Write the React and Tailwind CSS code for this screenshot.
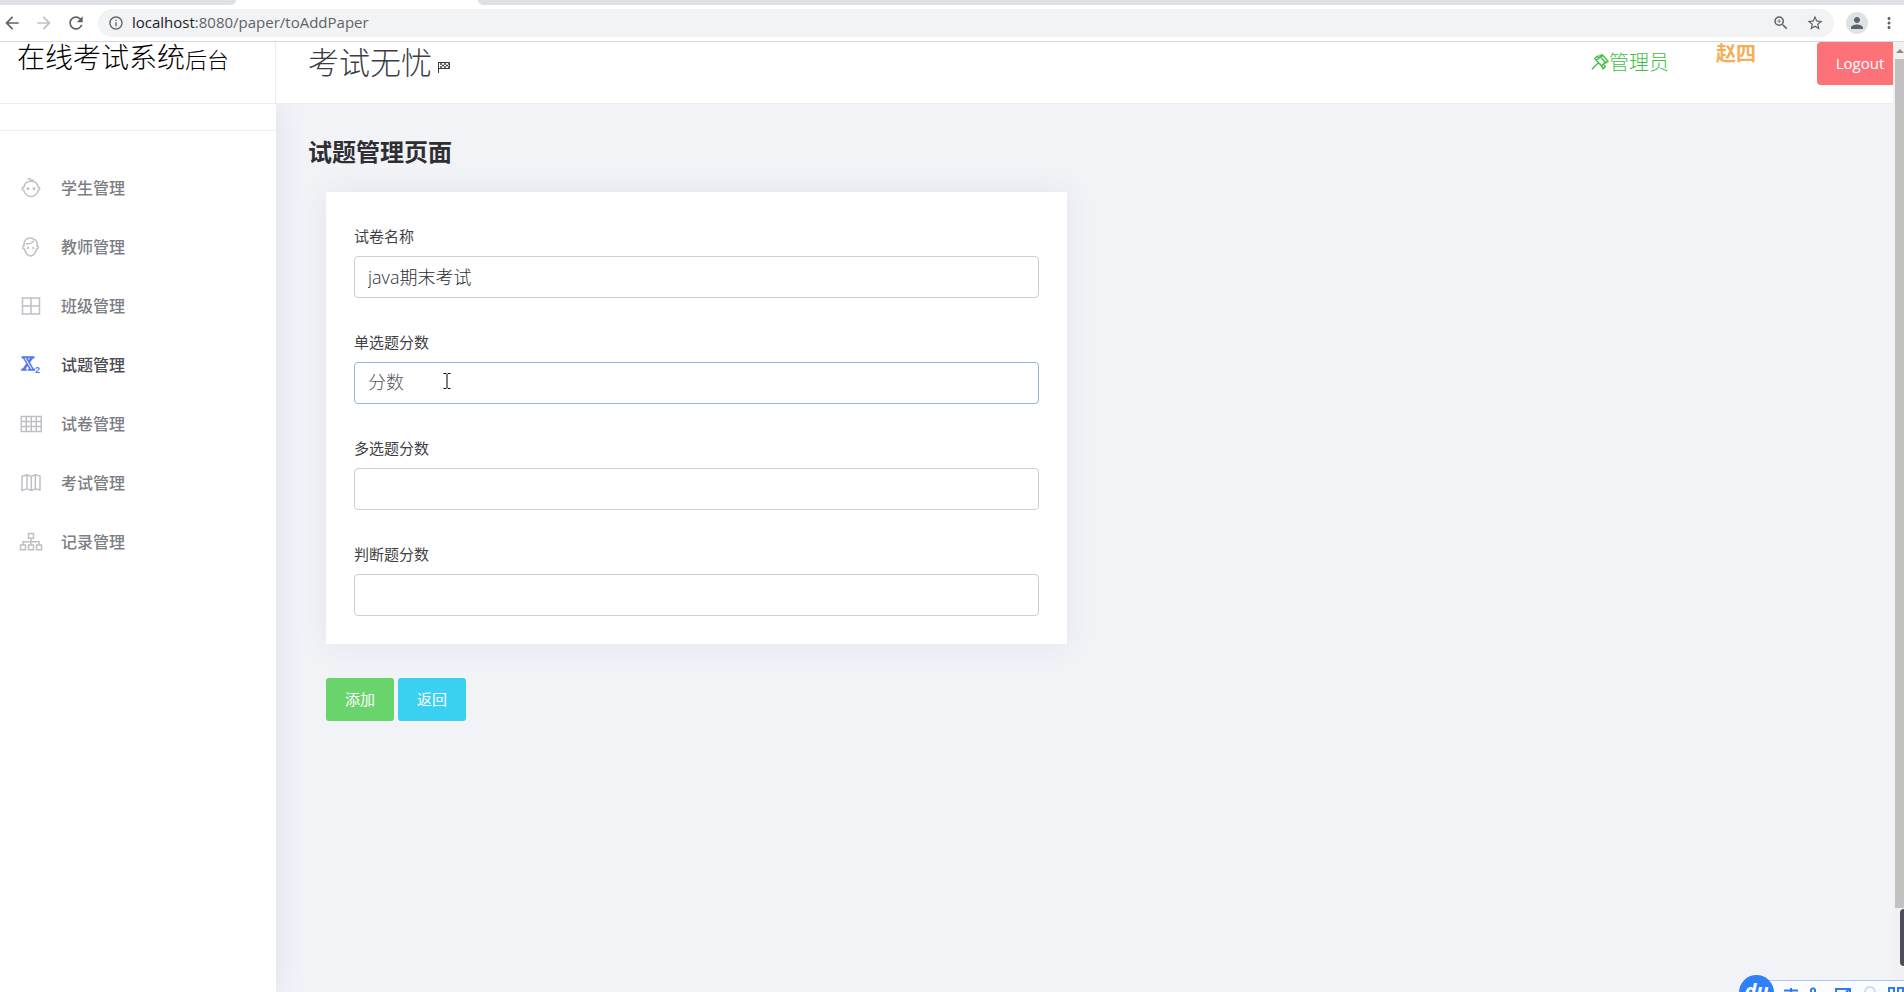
import React, { useState } from "react";
import {
  MdArrowBack,
  MdArrowForward,
  MdRefresh,
  MdInfoOutline,
  MdZoomIn,
  MdStarBorder,
  MdPerson,
  MdMoreVert,
} from "react-icons/md";

const iconProps = {
  viewBox: "0 0 20 20",
  fill: "none",
  stroke: "currentColor",
  strokeWidth: "1.5",
  overflow: "visible",
  className: "w-5 h-5 shrink-0",
  "aria-hidden": true,
};

const StudentIcon = () => (
  <svg {...iconProps}>
    <path d="M2.8 9.2C3.4 5.6 6.3 3.3 10 3.3s6.6 2.3 7.2 5.9c.9 0 1.6.7 1.6 1.5s-.7 1.400-1.500 1.400C16.400 15.600 13.600 18.400 10 18.400s-6.400-2.800-7.300-6.300c-.8 0-1.500-.6-1.500-1.400s.7-1.500 1.600-1.500z" />
    <path d="M6.5 .8c2.6-.2 3.8.6 4 2.5M10.6 3.2c.4-1 1.2-1.4 2.3-1.2" />
    <circle cx="7" cy="10.7" r=".7" fill="currentColor" />
    <circle cx="13" cy="10.7" r=".7" fill="currentColor" />
  </svg>
);

const TeacherIcon = () => (
  <svg {...iconProps}>
    <path d="M3 9C2.6 3.6 5.3 1 9.5 1c1.6 0 2.6.4 3.2 1.3C15.6 2.8 16.6 5.6 16 9c1.2 0 1.5 1 1.2 1.9-.3.8-.9 1.2-1.7 1.100C14.400 16 12.200 19 9.500 19S4.600 16 3.500 12c-.8.1-1.400-.3-1.700-1.100C1.500 10 1.800 9 3 9z" />
    <path d="M4.600 6.800c3.800.3 7-.8 8.400-3.300" />
    <circle cx="7" cy="11" r=".4" fill="currentColor" />
    <circle cx="12.2" cy="11" r=".4" fill="currentColor" />
  </svg>
);

const ClassIcon = () => (
  <svg {...iconProps}>
    <path d="M1.500 2h17v16h-17zM10 2v16M1.500 10h17" />
  </svg>
);

const QuestionIcon = () => (
  <svg {...iconProps}>
    <text x="0.500" y="14.500" fontSize="18" fontWeight="700" fontFamily="Liberation Serif" strokeWidth="1.400">
      X
    </text>
    <text x="14" y="18" fontSize="9" fontWeight="700" fontFamily="Liberation Sans" fill="currentColor" stroke="none">
      2
    </text>
  </svg>
);

const PaperIcon = () => (
  <svg {...iconProps}>
    <path d="M.3 2.500h19.900v15H.3zM.3 7.500h19.900M.3 12.500h19.900M5.300 2.500v15M10.300 2.500v15M15.300 2.500v15" />
  </svg>
);

const ExamIcon = () => (
  <svg {...iconProps}>
    <path d="M1 3.500l5-1.700 4.300 1.700 4-1.700 4.700 1.200v14l-4.700-1.200-4 1.700L6 15.800l-5 1.700zM6 1.800v14M10.300 3.500v14M14.300 1.800v14" />
  </svg>
);

const RecordIcon = () => (
  <svg {...iconProps}>
    <path d="M7.500 1.500h5v4.700h-5zM-.5 13h5v4.800h-5zM7.500 13h5v4.800h-5zM15.500 13h5v4.800h-5zM10 6.200V13M2 13V9.800h16V13" />
  </svg>
);

const GavelIcon = () => (
  <svg viewBox="0 0 20 20" fill="none" stroke="currentColor" strokeWidth="1.5" className="w-[18px] h-[18px]" aria-hidden="true">
    <path d="M1 17l7-7M4 5l3-2.500 2 2L5.800 7zM5.800 7l7 7.500M9 4.500l4-2.500M12.500 12l4.500-3.500M9.500 2l3-1.200L19 8l-2.500 2zM11.500 13l2-1.500 2.500 2.500-2.500 2.500z" />
  </svg>
);

const FlagIcon = () => (
  <svg viewBox="0 0 12 12" fill="none" stroke="currentColor" className="w-3 h-3" aria-hidden="true">
    <path d="M.5 1v11M1 1.500h10.500v6H1" />
    <path d="M2 3h2M6 3h2M10 3h1M4 4.500h2M8 4.500h2M2 6h2M6 6h2M10 6h1" strokeWidth="1.500" />
  </svg>
);

const menu = [
  { label: "学生管理", icon: StudentIcon },
  { label: "教师管理", icon: TeacherIcon },
  { label: "班级管理", icon: ClassIcon },
  { label: "试题管理", icon: QuestionIcon, active: true },
  { label: "试卷管理", icon: PaperIcon },
  { label: "考试管理", icon: ExamIcon },
  { label: "记录管理", icon: RecordIcon },
];

const fields = [
  { name: "paperName", label: "试卷名称" },
  { name: "singleScore", label: "单选题分数", placeholder: "分数", focused: true },
  { name: "multiScore", label: "多选题分数" },
  { name: "judgeScore", label: "判断题分数" },
];

const BrowserBar = () => (
  <div className="shrink-0 bg-white border-b border-[#d5d7da]">
    <div className="flex h-[5px]">
      <div className="w-[236px] bg-[#dee1e6] rounded-br-md" />
      <div className="w-[242px]" />
      <div className="flex-1 bg-[#dee1e6] rounded-bl-md" />
    </div>
    <div className="flex items-center h-9 pl-[2px] pr-[6px] text-[#5f6368]">
      <button type="button" aria-label="Back" className="mr-3">
        <MdArrowBack size={20} />
      </button>
      <button type="button" aria-label="Forward" className="mr-3 text-[#bdc1c6]">
        <MdArrowForward size={20} />
      </button>
      <button type="button" aria-label="Reload" className="mr-3">
        <MdRefresh size={20} />
      </button>
      <div className="flex flex-1 items-center h-7 rounded-full bg-[#f1f3f4] px-[10px]">
        <MdInfoOutline size={16} />
        <span className="ml-2 flex-1 text-[15px] leading-5 pb-[2px]">
          <span className="text-[#202124]">localhost</span>:8080/paper/toAddPaper
        </span>
        <button type="button" aria-label="Zoom" className="mr-4">
          <MdZoomIn size={18} />
        </button>
        <button type="button" aria-label="Bookmark">
          <MdStarBorder size={18} />
        </button>
      </div>
      <button type="button" aria-label="Profile" className="ml-3 flex items-center justify-center w-[22px] h-[22px] rounded-full bg-[#dee1e6]">
        <MdPerson size={18} />
      </button>
      <button type="button" aria-label="Menu" className="ml-3">
        <MdMoreVert size={18} />
      </button>
    </div>
  </div>
);

const Sidebar = () => (
  <aside className="w-[276px] shrink-0 bg-white shadow-[0_0_28px_0_rgba(82,63,105,0.10)]">
    <div className="h-[27px] border-b border-[#ebedf2]" />
    <nav className="pt-[27px]">
      {menu.map((item) => (
        <a
          key={item.label}
          href="#"
          className={`flex items-center h-[59px] pl-[21px] gap-5 text-base font-medium ${
            item.active ? "text-[#4a4a52]" : "text-[#7c7e84]"
          }`}
        >
          <span className={item.active ? "text-[#5578eb]" : "text-[#bfbfc6]"}>
            <item.icon />
          </span>
          {item.label}
        </a>
      ))}
    </nav>
  </aside>
);

const Header = () => (
  <header className="relative z-10 flex h-[62px] shrink-0 border-b border-[#ebedf2] bg-white">
    <div className="w-[276px] shrink-0 border-r border-[#ebedf2] pl-[17px]">
      <h3 className="text-[28px] leading-[30px] font-light text-black">
        在线考试系统<small className="text-[22px]">后台</small>
      </h3>
    </div>
    <div className="flex-1 pl-8 pt-[2px] flex gap-[6px] items-start text-[#3c3c44]">
      <h2 className="text-[31px] leading-9 font-light">考试无忧</h2>
      <span className="pt-[17px]">
        <FlagIcon />
      </span>
    </div>
    <div className="flex items-start">
      <span className="flex items-center pt-[7px] text-xl leading-7 font-light text-[#3fc043]">
        <GavelIcon />
        管理员
      </span>
      <span className="ml-[47px] text-xl leading-6 font-bold text-[#f5ae57]">赵四</span>
      <button type="button" className="ml-[61px] h-[43px] w-[76px] pl-[10px] rounded-l bg-[#fd7279] text-[15px] text-white">
        Logout
      </button>
    </div>
  </header>
);

// Pointer resting in the score field
const TextCursor = () => (
  <svg viewBox="0 0 8 16" fill="none" stroke="#000" className="absolute left-[89px] top-[11px] w-2 h-4 pointer-events-none" aria-hidden="true">
    <path d="M.5 .5h2.500L4 1.500l1-1h2.500M.5 15.500h2.500l1-1 1 1h2.500M4 1.500v13" />
  </svg>
);

const PaperForm = () => {
  const [paper, setPaper] = useState({
    paperName: "java期末考试",
    singleScore: "",
    multiScore: "",
    judgeScore: "",
  });

  const handleChange = (e) => {
    setPaper({ ...paper, [e.target.name]: e.target.value });
  };

  return (
    <form className="w-[741px] ml-[18px]" onSubmit={(e) => e.preventDefault()}>
      <div className="bg-white pt-8 px-7 pb-7 shadow-[0_0_28px_0_rgba(82,63,105,0.08)] space-y-8">
        {fields.map((field) => (
          <div key={field.name}>
            <label htmlFor={field.name} className="block text-[15px] leading-6 mb-2 text-[#3f3f46]">
              {field.label}
            </label>
            <div className="relative">
              <input
                id={field.name}
                name={field.name}
                type="text"
                value={paper[field.name]}
                placeholder={field.placeholder}
                onChange={handleChange}
                className={`block w-full h-[42px] px-[13px] pb-[2px] rounded border bg-white text-lg font-light text-[#2b3036] outline-none placeholder:text-[#4f575e] ${
                  field.focused ? "border-[#91b8da]" : "border-[#ccced8]"
                }`}
              />
              {field.focused && <TextCursor />}
            </div>
          </div>
        ))}
      </div>
      <div className="flex gap-1 mt-[34px]">
        <button type="submit" className="w-[68px] h-[43px] rounded-[3px] bg-[#69d46c] text-[15px] text-white">
          添加
        </button>
        <button type="button" className="w-[68px] h-[43px] rounded-[3px] bg-[#3ad1f1] text-[15px] text-white">
          返回
        </button>
      </div>
    </form>
  );
};

const Scrollbar = () => (
  <div className="w-[11px] shrink-0 bg-[#f1f1f1] flex flex-col items-end pb-[84px]" aria-hidden="true">
    <div className="h-[17px] w-[9px] flex items-center justify-center">
      <div className="border-x-4 border-b-4 border-x-transparent border-b-[#8a8a8a]" />
    </div>
    <div className="w-[9px] flex-1 bg-[#c1c1c1]" />
  </div>
);

// Input method bar floating over the bottom right corner
const InputMethodBar = () => (
  <div className="absolute right-0 bottom-0 z-20 w-[165px] h-[17px] overflow-hidden text-[#2f7cf0]">
    <div className="absolute left-5 right-0 top-[5px] h-8 border-t border-[#a9c8f5] bg-[#fbfcff]" />
    <div className="absolute left-0 top-0 w-[35px] h-[35px] rounded-full bg-[#2f80fb] text-white text-xl leading-8 font-bold italic text-center">
      du
    </div>
    <svg viewBox="0 0 120 12" fill="none" stroke="currentColor" strokeWidth="2" className="absolute right-0 bottom-0 w-[120px] h-3" aria-hidden="true">
      <path d="M0 10.500h14M7 8v4M27 12V9.500q2-2.500 4 0V12M52 12V9h14v3M62 12l4-3" />
      <circle cx="86" cy="12" r="5" stroke="#c9daf8" />
      <path d="M105 12V8h5v4M114 12V8h5v4" />
    </svg>
  </div>
);

const App = () => {
  return (
    <div className="relative h-screen flex flex-col overflow-hidden bg-[#f1f3f7] font-['Open_Sans','Noto_Sans_CJK_SC',sans-serif]">
      <BrowserBar />
      <div className="flex flex-1 min-h-0">
        <div className="flex flex-col flex-1 min-w-0">
          <Header />
          <div className="flex flex-1 min-h-0">
            <Sidebar />
            <main className="flex-1 min-w-0 pl-8 pt-8">
              <h1 className="text-2xl leading-8 font-bold text-[#2f2f33] mb-6">试题管理页面</h1>
              <PaperForm />
            </main>
          </div>
        </div>
        <Scrollbar />
      </div>
      <div className="absolute right-0 bottom-[26px] w-1 h-[57px] rounded-l bg-[#4d4c58]" />
      <InputMethodBar />
    </div>
  );
};

export default App;
